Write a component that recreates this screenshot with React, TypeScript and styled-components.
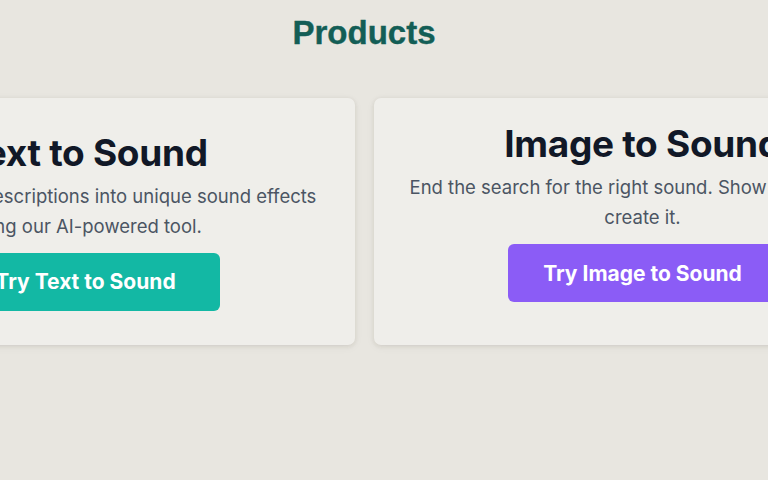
import React from 'react';
import styled, { createGlobalStyle } from 'styled-components';

const GlobalStyle = createGlobalStyle`
  html, body {
    margin: 0;
    padding: 0;
    background: #e8e6e0;
    overflow: hidden;
  }
  body {
    font-family: Inter, "Noto Sans", sans-serif;
  }
`;

const Main = styled.main`
  width: calc(100% - 40px);
  height: 480px;
  display: flex;
  flex-direction: column;
  align-items: center;
`;

const Heading = styled.h2`
  margin: 14px 0 0;
  font-family: "Liberation Sans", Arial, sans-serif;
  font-size: 33px;
  line-height: 38px;
  font-weight: 700;
  color: #135e56;
  -webkit-text-stroke: 0.4px #135e56;
`;

const CardRow = styled.div`
  margin-top: 46px;
  width: 100%;
  display: flex;
  justify-content: center;
  gap: 19px;
`;

const Card = styled.section<{ $lift?: boolean }>`
  flex: 0 0 538px;
  height: 247px;
  box-sizing: border-box;
  padding: 0 30px ${p => (p.$lift ? '17px' : '0')};
  display: flex;
  flex-direction: column;
  align-items: center;
  justify-content: center;
  text-align: center;
  background: #efeeea;
  border-radius: 7px;
  box-shadow: 0 1px 4px rgba(60, 50, 30, 0.1), 0 2px 10px rgba(60, 50, 30, 0.05);
`;

const Title = styled.h3`
  margin: 0;
  font-size: 37px;
  line-height: 40px;
  font-weight: 700;
  letter-spacing: -0.3px;
  color: #111827;
`;

const Description = styled.p`
  margin: 8px 0 0;
  font-size: 18.5px;
  line-height: 30px;
  color: #4b5563;
`;

const Action = styled.button<{ $tone: 'teal' | 'violet' }>`
  margin-top: 12px;
  width: 269px;
  height: 58px;
  border: none;
  border-radius: 6px;
  font-family: Inter, "Noto Sans", sans-serif;
  font-size: 21px;
  font-weight: 700;
  color: #ffffff;
  cursor: pointer;
  background: ${p => (p.$tone === 'teal' ? '#13b8a4' : '#8b5cf6')};
`;

const products = [
  {
    title: 'Text to Sound',
    text: 'Turn your text descriptions into unique sound effects using our AI-powered tool.',
    cta: 'Try Text to Sound',
    tone: 'teal' as const,
    lift: false,
  },
  {
    title: 'Image to Sound',
    text: "End the search for the right sound. Show us and we'll create it.",
    cta: 'Try Image to Sound',
    tone: 'violet' as const,
    lift: true,
  },
];

export default function App() {
  return (
    <>
      <GlobalStyle />
      <Main>
        <Heading>Products</Heading>
        <CardRow>
          {products.map(p => (
            <Card key={p.title} $lift={p.lift}>
              <Title>{p.title}</Title>
              <Description>{p.text}</Description>
              <Action $tone={p.tone}>{p.cta}</Action>
            </Card>
          ))}
        </CardRow>
      </Main>
    </>
  );
}
